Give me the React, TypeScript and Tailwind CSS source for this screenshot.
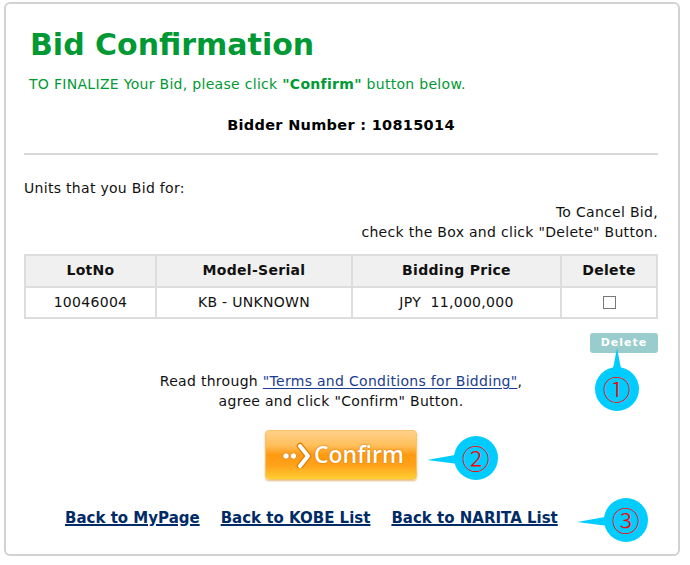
import React from 'react';

function Callout({ n, tip, className }: { n: string; tip: 'up' | 'left'; className: string }) {
  return (
    <div className={`absolute ${className}`}>
      <svg width="80" height="80" viewBox="0 0 80 80" className="absolute inset-0 overflow-visible">
        {tip === 'up' ? (
          <polygon points="34,30 40,-1 46,30" fill="#00ccff" />
        ) : (
          <polygon points="30,35 -9,42 30,47" fill="#00ccff" />
        )}
        <circle cx="40" cy="40" r="22" fill="#00ccff" />
      </svg>
      <span className="absolute inset-0 flex items-center justify-center text-[28px] leading-none text-[#ff0000] font-['Noto_Sans_CJK_JP',sans-serif] font-light">
        {n}
      </span>
    </div>
  );
}

export default function App() {
  return (
    <div className="relative w-[690px] h-[565px] bg-white font-['DejaVu_Sans',sans-serif] text-[14px] tracking-[0.3px] text-[#111]">
      <div className="ml-[4px] pt-[2px]">
        <div className="w-[676px] h-[554px] border-2 border-[#d2d2d2] rounded-md pl-[18px] pr-[20px] pt-[21px]">
          <h1 className="ml-[6px] text-[30px] leading-[40px] font-bold tracking-normal text-[#009933]">Bid Confirmation</h1>
          <p className="ml-[5px] mt-[9px] text-[#009933]">
            TO FINALIZE Your Bid, please click <b>"Confirm"</b> button below.
          </p>
          <p className="mt-[20px] text-center text-[14.5px] font-bold text-black">Bidder Number : 10815014</p>
          <hr className="mt-[16px] border-t-2 border-[#d8d8d8]" />

          <p className="mt-[23px]">Units that you Bid for:</p>
          <div className="mt-[3px] text-right leading-[20px]">
            <p>To Cancel Bid,</p>
            <p>check the Box and click "Delete" Button.</p>
          </div>

          <table className="mt-[12px] w-full border-collapse text-center">
            <thead>
              <tr className="h-[32px] bg-[#f0f0f0]">
                <th className="w-[131px] border-2 border-[#dddddd] font-bold">LotNo</th>
                <th className="w-[196px] border-2 border-[#dddddd] font-bold">Model-Serial</th>
                <th className="w-[209px] border-2 border-[#dddddd] font-bold">Bidding Price</th>
                <th className="border-2 border-[#dddddd] font-bold">Delete</th>
              </tr>
            </thead>
            <tbody>
              <tr className="h-[31px]">
                <td className="border-2 border-[#dddddd]">10046004</td>
                <td className="border-2 border-[#dddddd]">KB - UNKNOWN</td>
                <td className="border-2 border-[#dddddd]">JPY&nbsp;&nbsp;11,000,000</td>
                <td className="border-2 border-[#dddddd]">
                  <span className="inline-block w-[13px] h-[13px] border border-[#777] bg-white align-middle" />
                </td>
              </tr>
            </tbody>
          </table>

          <div className="mt-[14px] flex justify-end">
            <button className="w-[68px] h-[20px] rounded-[3px] bg-[#99cccc] text-white text-[11px] font-bold tracking-[1px] leading-none">
              Delete
            </button>
          </div>

          <div className="mt-[18px] text-center leading-[20px]">
            <p>
              Read through{' '}
              <a href="#" className="text-[#1a3d8f] underline underline-offset-2">"Terms and Conditions for Bidding"</a>,
            </p>
            <p>agree and click "Confirm" Button.</p>
          </div>

          <div className="mt-[19px] flex justify-center">
            <button className="flex items-center gap-[2px] w-[152px] h-[50px] pl-[16px] rounded-[4px] border border-[#f5c46a] bg-[linear-gradient(180deg,#ffd08a_0%,#ffbf5c_30%,#ff9a10_50%,#ffa21a_72%,#ffcf33_100%)] shadow-[0_1px_2px_rgba(200,120,0,0.5)]">
              <svg width="30" height="26" viewBox="0 0 30 26">
                <circle cx="4" cy="14" r="3.2" fill="white" stroke="#e07e00" strokeWidth="0.8" />
                <circle cx="11.5" cy="14" r="3.2" fill="white" stroke="#e07e00" strokeWidth="0.8" />
                <path d="M18 4 L26 14 L18 24" fill="none" stroke="#e07e00" strokeWidth="6.5" strokeLinecap="round" strokeLinejoin="round" />
                <path d="M18 4 L26 14 L18 24" fill="none" stroke="white" strokeWidth="4" strokeLinecap="round" strokeLinejoin="round" />
              </svg>
              <span className="text-[23px] leading-none tracking-normal text-white font-['Open_Sans',sans-serif] font-semibold [text-shadow:0_0_2px_#d97a00,0_0_1px_#d97a00]">
                Confirm
              </span>
            </button>
          </div>

          <div className="mt-[27px] flex gap-[21px] pl-[41px] text-[15px] font-bold tracking-normal text-[#002b66]">
            <a href="#" className="underline decoration-2">Back to MyPage</a>
            <a href="#" className="underline decoration-2">Back to KOBE List</a>
            <a href="#" className="underline decoration-2">Back to NARITA List</a>
          </div>
        </div>
      </div>

      <Callout n="①" tip="up" className="left-[577px] top-[349px] w-[80px] h-[80px]" />
      <Callout n="②" tip="left" className="left-[436px] top-[418px] w-[80px] h-[80px]" />
      <Callout n="③" tip="left" className="left-[586px] top-[480px] w-[80px] h-[80px]" />
    </div>
  );
}
